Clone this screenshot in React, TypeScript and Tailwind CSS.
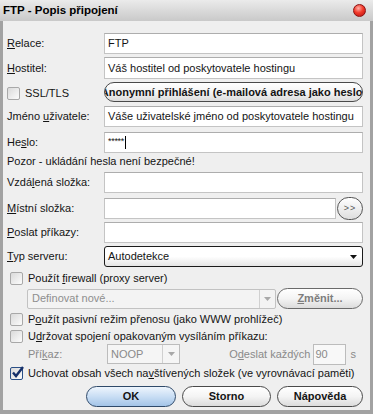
import type { ReactNode } from "react";

function Check({ checked }: { checked?: boolean }) {
  return (
    <span
      className={`relative w-[13px] h-[13px] shrink-0 rounded-[2px] border bg-linear-to-br from-[#dadada] to-[#fcfcfc] ${
        checked ? "border-[#2a4f86]" : "border-[#a8a8a8]"
      }`}
    >
      {checked && (
        <svg className="absolute -top-[3px] -left-[1px]" width="15" height="15" viewBox="0 0 15 15">
          <path d="M3 7.5 L6 11 L13 2" fill="none" stroke="#16306a" strokeWidth="2.4" />
        </svg>
      )}
    </span>
  );
}

function Field({ label, children, mt }: { label: ReactNode; children?: ReactNode; mt: string }) {
  return (
    <div className={`flex items-center h-[21px] ${mt}`}>
      <div className="w-[97px] shrink-0">{label}</div>
      {children ?? <div className="flex-1 h-full border border-[#c4c4c4] border-t-[#adadad] bg-white" />}
    </div>
  );
}

function Input({ text }: { text: string }) {
  return (
    <div className="flex-1 h-full border border-[#c4c4c4] border-t-[#adadad] bg-white flex items-center px-[3px] whitespace-nowrap overflow-hidden">
      {text}
    </div>
  );
}

function Pill({ children, className = "" }: { children: ReactNode; className?: string }) {
  return (
    <div
      className={`h-[21px] rounded-full border border-[#4a4a4a] bg-linear-to-b from-white via-[#f4f4f4] to-[#dcdcdc] flex items-center justify-center font-bold whitespace-nowrap overflow-hidden ${className}`}
    >
      {children}
    </div>
  );
}

function Arrow({ color }: { color: string }) {
  return (
    <svg width="7" height="4" viewBox="0 0 7 4">
      <path d="M0 0 H7 L3.5 4 Z" fill={color} />
    </svg>
  );
}

const u = "underline underline-offset-[1px]";

export default function App() {
  return (
    <div className="w-[373px] h-[414px] flex flex-col bg-[#efefef] text-[#141414] text-[11px] font-['Liberation_Sans',Arial,sans-serif]">
      {/* title bar */}
      <div className="h-[21px] shrink-0 flex items-center justify-between pl-[3px] pr-[7px] bg-linear-to-b from-[#ebebeb] to-[#c9c9c9]">
        <span className="font-bold text-[11.5px] text-black">FTP - Popis připojení</span>
        <span className="w-[13px] h-[13px] rounded-full border border-[#8c1010] bg-[radial-gradient(circle_at_40%_30%,#ffb0a8_0%,#f23a2a_45%,#b40f0f_100%)]" />
      </div>

      <div className="flex-1 flex flex-col border-l-[3px] border-r-[3px] border-b-[4px] border-[#a2a2a2] pl-[4px] pr-[7px]">
        <Field mt="mt-[12px]" label={<><span className={u}>R</span>elace:</>}>
          <Input text="FTP" />
        </Field>
        <div className="flex items-center h-[22px] mt-[3px]">
          <div className="w-[97px] shrink-0">
            <span className={u}>H</span>ostitel:
          </div>
          <Input text="Váš hostitel od poskytovatele hostingu" />
        </div>
        <div className="flex items-center h-[20px] mt-[3px]">
          <div className="w-[97px] shrink-0 flex items-center gap-[5px] pt-[3px]">
            <Check />
            <span>SSL/TLS</span>
          </div>
          <Pill className="flex-1 h-[20px]! text-[11px]">
            Anonymní přihlášení (e-mailová adresa jako heslo)
          </Pill>
        </div>
        <Field mt="mt-[4px]" label={<>Jméno <span className={u}>u</span>živatele:</>}>
          <Input text="Váše uživatelské jméno od poskytovatele hostingu" />
        </Field>
        <Field
          mt="mt-[5px]"
          label={<>He<span className={u}>s</span>lo:</>}
        >
          <div className="flex-1 h-full border border-[#c4c4c4] border-t-[#adadad] bg-white flex items-center pl-[3px]">
            <span className="text-[9px] leading-none -mt-[3px] tracking-[-0.3px]">*****</span>
            <span className="w-[1px] h-[13px] bg-black ml-[1px]" />
          </div>
        </Field>
        <div className="h-[16px] flex items-center">Pozor - ukládání hesla není bezpečné!</div>
        <Field mt="mt-[3px]" label={<>Vzdá<span className={u}>l</span>ená složka:</>} />
        <div className="flex items-center h-[21px] mt-[5px]">
          <div className="w-[97px] shrink-0">
            <span className={u}>M</span>ístní složka:
          </div>
          <div className="flex-1 h-full border border-[#c4c4c4] border-t-[#adadad] bg-white" />
          <div className="w-[26px] h-[23px] ml-[1px] rounded-full border border-[#555] bg-linear-to-b from-white to-[#dedede] flex items-center justify-center text-[9px] text-[#555] tracking-[1px]">
            &gt;&gt;
          </div>
        </div>
        <Field mt="mt-[3px]" label={<><span className={u}>P</span>oslat příkazy:</>} />
        <Field mt="mt-[3px]" label={<><span className={u}>T</span>yp serveru:</>}>
          <div className="flex-1 h-full rounded-[3px] border border-[#1c1c1c] bg-linear-to-b from-white via-white to-[#e6e6e6] flex items-center justify-between pl-[3px] pr-[5px]">
            <span>Autodetekce</span>
            <Arrow color="#111" />
          </div>
        </Field>

        <div className="flex items-center h-[16px] mt-[3px] pl-[3px] gap-[5px]">
          <Check />
          <span>
            Použít <span className={u}>f</span>irewall (proxy server)
          </span>
        </div>
        <div className="flex items-center h-[21px] mt-[2px] pl-[20px]">
          <div className="w-[249px] h-[20px] border border-[#c2c2c2] bg-[#f3f3f3] flex items-center text-[#8e8e8e] rounded-[2px]">
            <span className="flex-1 pl-[4px]">Definovat nové...</span>
            <div className="w-[16px] h-full border-l border-[#d0d0d0] flex items-center justify-center">
              <Arrow color="#a8a8a8" />
            </div>
          </div>
          <Pill className="ml-auto w-[86px] text-[#7d7d7d] border-[#6a6a6a]!">
            <span className={u}>Z</span>měnit...
          </Pill>
        </div>
        <div className="flex items-center h-[16px] mt-[2px] pl-[3px] gap-[5px]">
          <Check />
          <span>
            P<span className={u}>o</span>užít pasivní režim přenosu (jako WWW prohlížeč)
          </span>
        </div>
        <div className="flex items-center h-[16px] mt-[1px] pl-[3px] gap-[5px]">
          <Check />
          <span>
            U<span className={u}>d</span>ržovat spojení opakovaným vysíláním příkazu:
          </span>
        </div>
        <div className="flex items-center h-[20px] text-[#8a8a8a]">
          <div className="w-[100px] pl-[21px] shrink-0">
            Pří<span className={u}>k</span>az:
          </div>
          <div className="w-[73px] h-[20px] border border-[#bcbcbc] bg-[#f5f5f5] flex items-center">
            <span className="flex-1 pl-[3px]">NOOP</span>
            <div className="w-[17px] h-full border-l border-[#d0d0d0] flex items-center justify-center">
              <Arrow color="#a8a8a8" />
            </div>
          </div>
          <span className="ml-auto">
            O<span className={u}>d</span>eslat každých
          </span>
          <div className="w-[33px] h-[21px] ml-[2px] border border-[#bcbcbc] bg-[#f8f8f8] flex items-center pl-[2px]">
            90
          </div>
          <span className="ml-[5px] mr-[7px]">s</span>
        </div>
        <div className="flex items-center h-[16px] mt-[1px] pl-[3px] gap-[5px]">
          <Check checked />
          <span>
            Uchovat obsah všech na<span className={u}>v</span>štívených složek (ve vyrovnávací paměti)
          </span>
        </div>
        <div className="flex justify-end gap-[6px] mt-[5px]">
          <div className="w-[90px] h-[21px] rounded-full border border-[#2f4a6a] bg-linear-to-b from-[#eef5fd] via-[#c9def4] to-[#a3c4e8] flex items-center justify-center font-bold">
            OK
          </div>
          <Pill className="w-[89px]">Storno</Pill>
          <Pill className="w-[86px]">Nápověda</Pill>
        </div>
      </div>
    </div>
  );
}
